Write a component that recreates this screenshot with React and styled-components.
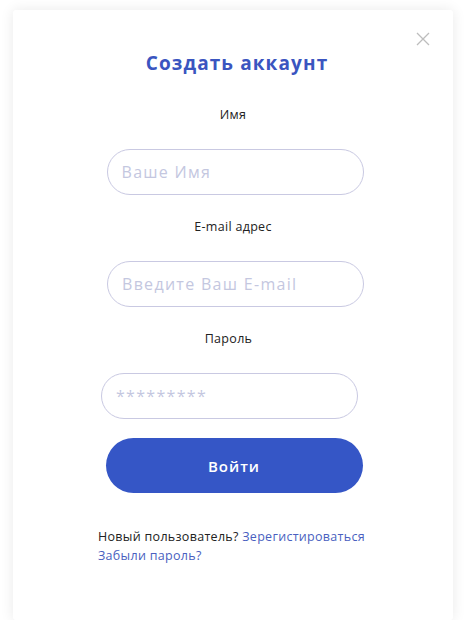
import React from 'react';
import styled, { createGlobalStyle } from 'styled-components';

const GlobalStyle = createGlobalStyle`
  html, body {
    margin: 0;
    padding: 0;
    background: #ffffff;
    font-family: 'Open Sans', 'Noto Sans', sans-serif;
  }
`;

const Page = styled.div`
  padding: 10px 0 0 13px;
`;

const Card = styled.div`
  position: relative;
  box-sizing: border-box;
  width: 440px;
  height: 610px;
  padding: 39px 0 0;
  background: #ffffff;
  border-radius: 3px;
  box-shadow: 0 0 14px rgba(0, 0, 0, 0.09);
  display: flex;
  flex-direction: column;
  align-items: center;
`;

const Close = styled.button`
  position: absolute;
  top: 22px;
  right: 23px;
  width: 14px;
  height: 14px;
  padding: 0;
  border: 0;
  background: none;
  cursor: pointer;
`;

const Title = styled.h2`
  margin: 0 0 29px 8px;
  font-size: 19px;
  line-height: 28px;
  font-weight: 700;
  letter-spacing: 1.1px;
  color: #3a55c0;
`;

const Label = styled.label`
  display: block;
  margin: 0 0 25px ${(p) => p.shift || 0}px;
  font-size: 12.5px;
  line-height: 18px;
  color: #222222;
  letter-spacing: 0.3px;
`;

const Input = styled.input`
  box-sizing: border-box;
  width: 257px;
  height: 46px;
  margin: 0 0 23px ${(p) => p.shift || 0}px;
  padding: 0 14px;
  border: 1.5px solid #c9c9e2;
  border-radius: 23px;
  outline: none;
  font-family: 'Open Sans', 'Noto Sans', sans-serif;
  font-size: 16px;
  letter-spacing: 1.3px;
  color: #333;
  background: #fff;

  &::placeholder {
    color: #c4c7df;
  }
`;

const Button = styled.button`
  box-sizing: border-box;
  width: 257px;
  height: 55px;
  margin: -4px 0 34px 2px;
  border: 0;
  border-radius: 28px;
  background: #3556c6;
  color: #ffffff;
  font-family: 'Open Sans', 'Noto Sans', sans-serif;
  font-size: 15px;
  font-weight: 600;
  letter-spacing: 1px;
  cursor: pointer;
`;

const Links = styled.div`
  align-self: flex-start;
  margin-left: 85px;
  font-size: 12.5px;
  line-height: 19px;
  letter-spacing: 0.3px;
  color: #222222;
`;

const Link = styled.a`
  color: #4a5fc0;
  text-decoration: none;
`;

const CloseIcon = () => (
  <svg width="14" height="14" viewBox="0 0 14 14">
    <path d="M1 1 L13 13 M13 1 L1 13" stroke="#bdbdbd" strokeWidth="1.3" fill="none" />
  </svg>
);

export default function App() {
  return (
    <Page>
      <GlobalStyle />
      <Card>
        <Close aria-label="Закрыть">
          <CloseIcon />
        </Close>
        <Title>Создать аккаунт</Title>
        <Label>Имя</Label>
        <Input type="text" placeholder="Ваше Имя" shift={4} />
        <Label>E-mail адрес</Label>
        <Input type="email" placeholder="Введите Ваш E-mail" shift={5} />
        <Label shift={-9}>Пароль</Label>
        <Input type="password" placeholder="*********" shift={-7} />
        <Button>Войти</Button>
        <Links>
          Новый пользователь? <Link href="#">Зерегистироваться</Link>
          <br />
          <Link href="#">Забыли пароль?</Link>
        </Links>
      </Card>
    </Page>
  );
}
